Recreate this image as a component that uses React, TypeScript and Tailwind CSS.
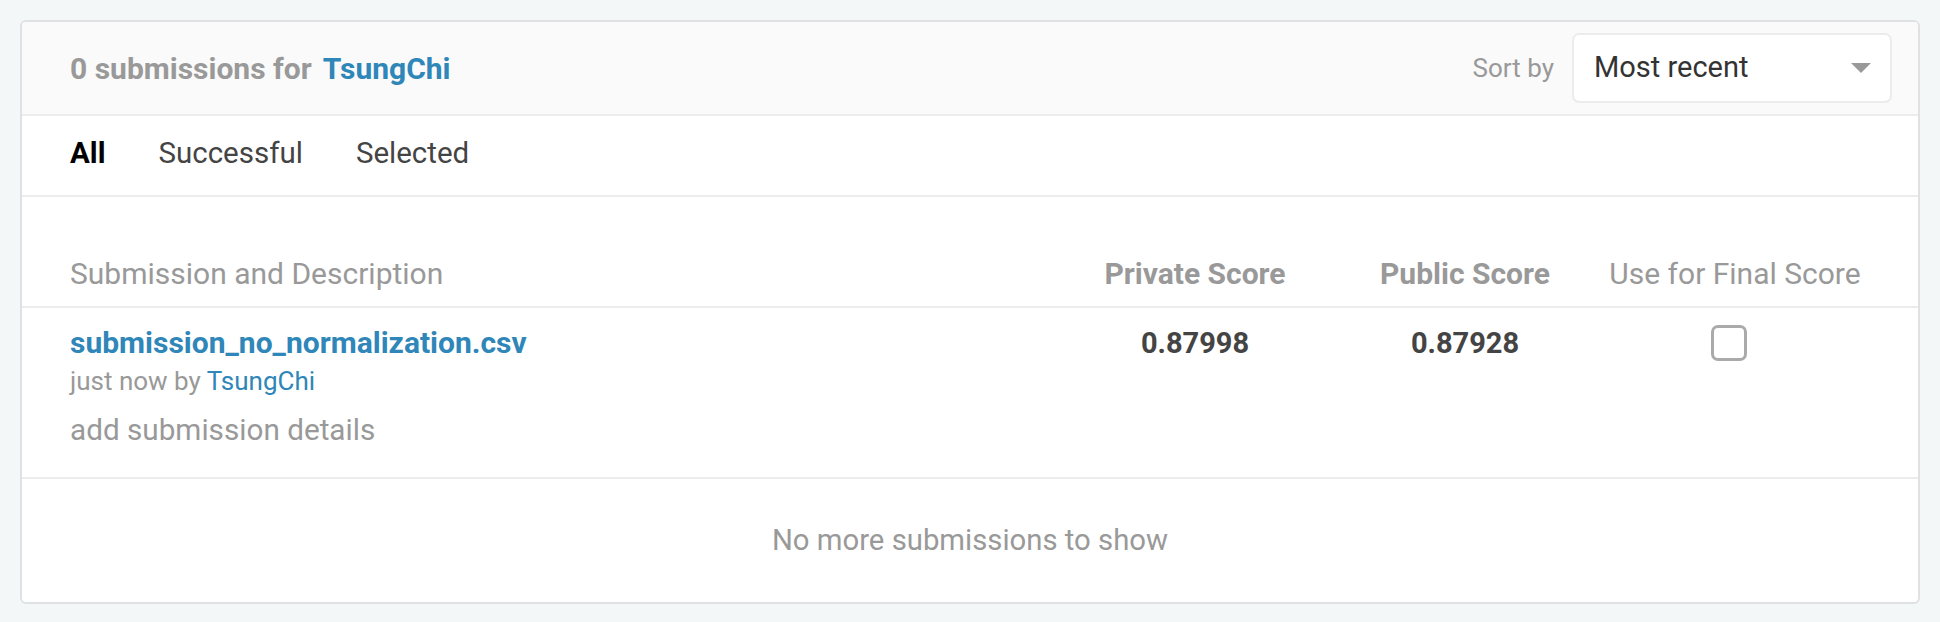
export default function App() {
  return (
    <main className="min-h-screen bg-[#f4f7f8] px-[20px] pt-[20px] font-['Roboto','Liberation_Sans',sans-serif]">
      <div className="rounded-[6px] border-2 border-[#dfe2e4] bg-white overflow-hidden">
        {/* header */}
        <div className="flex h-[94px] items-center justify-between border-b-2 border-[#ececec] bg-[#fafafa] pl-[48px] pr-[26px]">
          <div className="flex gap-x-[11px] text-[30px] font-bold">
            <span className="text-[#999]">0 submissions for</span>
            <a className="text-[#2f86b8]">TsungChi</a>
          </div>
          <div className="flex items-center gap-x-[18px]">
            <span className="text-[26px] text-[#999]">Sort by</span>
            <div className="flex h-[70px] w-[320px] items-center justify-between rounded-[7px] border-2 border-[#ececec] bg-white pl-[20px] pr-[19px]">
              <span className="text-[29px] text-[#333]">Most recent</span>
              <svg width="20" height="10" viewBox="0 0 20 10">
                <path d="M0 0 H20 L10 10 Z" fill="#999" />
              </svg>
            </div>
          </div>
        </div>

        {/* tabs */}
        <div className="flex h-[81px] items-center gap-x-[53px] border-b-2 border-[#ececec] pl-[48px] pb-[4px] text-[29.5px]">
          <a className="font-bold text-black">All</a>
          <a className="text-[#444]">Successful</a>
          <a className="text-[#444]">Selected</a>
        </div>

        {/* table head */}
        <div className="grid grid-cols-[1fr_270px_270px_270px] border-b-2 border-[#ececec] px-[48px] pt-[59px] pb-[14px] text-[30px] leading-[36px] text-[#999]">
          <div>Submission and Description</div>
          <div className="text-center font-bold">Private Score</div>
          <div className="text-center font-bold">Public Score</div>
          <div className="text-center">Use for Final Score</div>
        </div>

        {/* submission row */}
        <div className="grid grid-cols-[1fr_270px_270px_270px] border-b-2 border-[#ececec] px-[48px] pt-[17px] pb-[29px]">
          <div className="flex flex-col">
            <a className="text-[30px] font-bold leading-[36px] text-[#2f86b8]">submission_no_normalization.csv</a>
            <div className="mt-[4px] text-[26px] leading-[32px] text-[#999]">
              just now by <a className="text-[#2f86b8]">TsungChi</a>
            </div>
            <div className="mt-[15px] text-[29.7px] leading-[36px] text-[#999]">add submission details</div>
          </div>
          <div className="text-center text-[29px] font-bold leading-[36px] text-[#444]">0.87998</div>
          <div className="text-center text-[29px] font-bold leading-[36px] text-[#444]">0.87928</div>
          <div className="flex h-[36px] items-center justify-center pr-[12px]">
            <div className="h-[36px] w-[36px] rounded-[7px] border-[3px] border-[#aaa] bg-white" />
          </div>
        </div>

        {/* footer */}
        <div className="flex h-[123px] items-center justify-center text-[29.3px] text-[#999]">
          No more submissions to show
        </div>
      </div>
    </main>
  );
}
